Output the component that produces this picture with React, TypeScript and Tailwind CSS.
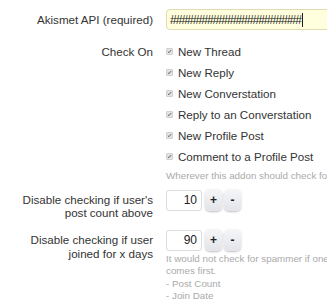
import React from "react";

const font = { fontFamily: '"Liberation Sans", Arial, sans-serif' };

function Check() {
  return (
    <span className="inline-flex items-center justify-center w-[7px] h-[7px] bg-[#e4e4e4] border border-[#d0d0d0] rounded-[1px] mr-[5px] shrink-0">
      <svg width="7" height="7" viewBox="0 0 7 7">
        <path d="M1.2 3.6 L2.8 5.2 L5.8 1.4" stroke="#444" strokeWidth="1.1" fill="none" />
      </svg>
    </span>
  );
}

function Btn({ t }: { t: string }) {
  return (
    <span className="inline-flex items-center justify-center w-[17px] h-[22px] rounded-[5px] bg-gradient-to-b from-[#f6f6f8] to-[#e2e4ea] shadow-[0_1px_2px_rgba(0,0,0,0.25)] text-[12px] text-[#222] font-bold leading-none">
      {t}
    </span>
  );
}

function Num({ v }: { v: string }) {
  return (
    <div className="flex items-center gap-[2px]">
      <div className="w-[36px] h-[21px] border border-[#dcdcdc] rounded-[3px] bg-white text-right pr-[4px] text-[12px] leading-[19px] text-[#222] mr-[1px]">
        {v}
      </div>
      <Btn t="+" />
      <Btn t="-" />
    </div>
  );
}

const items = [
  "New Thread",
  "New Reply",
  "New Converstation",
  "Reply to an Converstation",
  "New Profile Post",
  "Comment to a Profile Post",
];

export default function App() {
  return (
    <div className="w-[327px] h-[300px] overflow-hidden bg-white text-[#333]" style={font}>
      <div className="grid grid-cols-[153px_1fr] gap-x-[13px] pt-[9px] text-[11.6px]">
        <div className="text-right leading-[22px]">Akismet API (required)</div>
        <div className="h-[21px] border border-[#e0dcb0] rounded-l-[4px] bg-[#ffffdd] w-[200px] flex items-center pl-[3px] text-[12px] tracking-[-0.98px] text-[#222] whitespace-nowrap overflow-hidden">
          #######################<span className="inline-block w-px h-[14px] bg-[#222] ml-[1px]"></span>
        </div>

        <div className="text-right leading-[21px] mt-[10px]">Check On</div>
        <div className="mt-[10px] whitespace-nowrap">
          {items.map((it) => (
            <div key={it} className="flex items-center h-[21px]">
              <Check />
              <span>{it}</span>
            </div>
          ))}
          <div className="text-[9.8px] text-[#aaa] leading-[13px] mt-[2px]">
            Wherever this addon should check for spammer
          </div>
        </div>

        <div className="text-right leading-[13px] mt-[11px]">
          Disable checking if user's
          <br />
          post count above
        </div>
        <div className="mt-[7px]">
          <Num v="10" />
        </div>

        <div className="text-right leading-[14px] mt-[14px]">
          Disable checking if user
          <br />
          joined for x days
        </div>
        <div className="mt-[10px] whitespace-nowrap">
          <Num v="90" />
          <div className="text-[9.8px] text-[#aaa] leading-[12.3px] mt-[2px]">
            It would not check for spammer if one of these
            <br />
            comes first.
            <br />- Post Count
            <br />- Join Date
          </div>
        </div>
      </div>
    </div>
  );
}
